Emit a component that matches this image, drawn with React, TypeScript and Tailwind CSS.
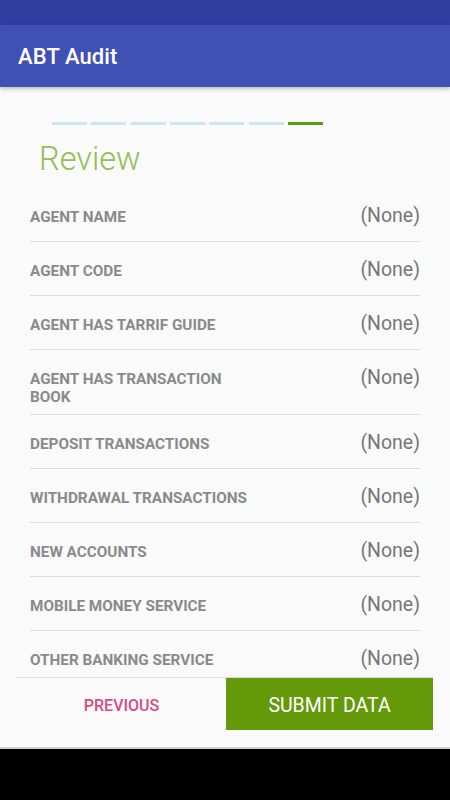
import React from "react";

const fields = [
  "Agent Name",
  "Agent Code",
  "Agent has Tarrif Guide",
  "Agent has Transaction Book",
  "Deposit Transactions",
  "Withdrawal Transactions",
  "New Accounts",
  "Mobile Money Service",
  "Other Banking Service",
];

const steps = [false, false, false, false, false, false, true];

export default function App() {
  return (
    <div
      className="h-[800px] w-[450px] flex flex-col bg-[#fafafa] overflow-hidden"
      style={{ fontFamily: "Roboto, 'Liberation Sans', sans-serif" }}
    >
      {/* status bar */}
      <div className="h-[25px] bg-[#303f9f] shrink-0" />

      {/* toolbar */}
      <div className="h-[62px] bg-[#3f51b5] shrink-0 flex items-center px-[18px] shadow-[0_2px_4px_rgba(0,0,0,0.25)] relative z-10">
        <span className="text-white text-[22px] font-medium tracking-[0.1px]">ABT Audit</span>
      </div>

      {/* content */}
      <div className="flex-1 min-h-0 overflow-hidden">
        <div className="flex gap-[4.33px] pl-[52px] pt-[35px]">
          {steps.map((active, i) => (
            <div
              key={i}
              className={active ? "w-[35px] h-[3px] bg-[#5f990d]" : "w-[35px] h-[3px] bg-[#cbe6ee]"}
            />
          ))}
        </div>

        <h1 className="pl-[39px] mt-[15px] text-[32.5px] font-light leading-[38px] text-[#92bf55]">Review</h1>

        <div className="mx-[30px] mt-[10px]">
          {fields.map((f) => (
            <div
              key={f}
              className="flex items-start justify-between border-b border-[#dcdcdc] min-h-[54px] pt-[20px] pb-[8px]"
            >
              <span className="w-[225px] text-[15.3px] font-bold uppercase leading-[18px] text-[#8a8a8a]">{f}</span>
              <span className="-mt-[4px] text-[19.5px] leading-[23px] text-[#767676]">(None)</span>
            </div>
          ))}
        </div>
      </div>

      {/* bottom actions */}
      <div className="shrink-0 mx-[17px] border-t border-[#dcdcdc] flex h-[53px]">
        <div className="flex-1 flex items-center justify-center pt-[3px] text-[16px] font-medium text-[#d94a80]">
          PREVIOUS
        </div>
        <div className="w-[207px] h-[52px] bg-[#64990a] flex items-center justify-center pt-[3px] text-white text-[19.5px]">
          SUBMIT DATA
        </div>
      </div>
      <div className="h-[17px] shrink-0" />

      {/* nav bar */}
      <div className="h-[53px] shrink-0 bg-black border-t-2 border-[#cfcfcf]" />
    </div>
  );
}
